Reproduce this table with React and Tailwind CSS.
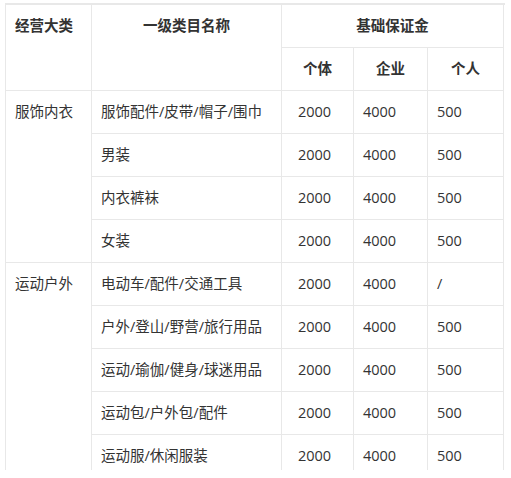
import React from 'react';

const groups = [
  {
    name: '服饰内衣',
    rows: [
      ['服饰配件/皮带/帽子/围巾', '2000', '4000', '500'],
      ['男装', '2000', '4000', '500'],
      ['内衣裤袜', '2000', '4000', '500'],
      ['女装', '2000', '4000', '500'],
    ],
  },
  {
    name: '运动户外',
    rows: [
      ['电动车/配件/交通工具', '2000', '4000', '/'],
      ['户外/登山/野营/旅行用品', '2000', '4000', '500'],
      ['运动/瑜伽/健身/球迷用品', '2000', '4000', '500'],
      ['运动包/户外包/配件', '2000', '4000', '500'],
      ['运动服/休闲服装', '2000', '4000', '500'],
    ],
  },
];

const cell = 'border border-[#e8e8e8] h-[43px] px-[9px] py-0 align-middle';

export default function App() {
  return (
    <div className="w-[511px] h-[478px] bg-white pt-[3px] pl-[5px] font-['Open_Sans','Noto_Sans_CJK_SC',sans-serif] text-[14.5px] text-[#333]">
      <div className="h-[467px] w-[500px] overflow-hidden border-t-2 border-[#e8e8e8]">
        <table className="border-collapse table-fixed w-[498px] -mt-px">
          <colgroup>
            <col className="w-[86px]" />
            <col className="w-[190px]" />
            <col className="w-[72px]" />
            <col className="w-[74px]" />
            <col className="w-[76px]" />
          </colgroup>
          <thead>
            <tr>
              <th rowSpan={2} className={`${cell} align-top pt-[10px] text-left font-bold`}>经营大类</th>
              <th rowSpan={2} className={`${cell} align-top pt-[10px] text-center font-bold`}>一级类目名称</th>
              <th colSpan={3} className={`${cell} text-center font-bold`}>基础保证金</th>
            </tr>
            <tr>
              <th className={`${cell} text-center font-bold`}>个体</th>
              <th className={`${cell} text-center font-bold`}>企业</th>
              <th className={`${cell} text-center font-bold`}>个人</th>
            </tr>
          </thead>
          <tbody>
            {groups.map((g) =>
              g.rows.map((r, i) => (
                <tr key={g.name + i}>
                  {i === 0 && (
                    <td rowSpan={g.rows.length} className={`${cell} align-top pt-[10px]`}>
                      {g.name}
                    </td>
                  )}
                  <td className={cell}>{r[0]}</td>
                  <td className={`${cell} pl-4`}>{r[1]}</td>
                  <td className={cell}>{r[2]}</td>
                  <td className={cell}>{r[3]}</td>
                </tr>
              ))
            )}
          </tbody>
        </table>
      </div>
    </div>
  );
}
